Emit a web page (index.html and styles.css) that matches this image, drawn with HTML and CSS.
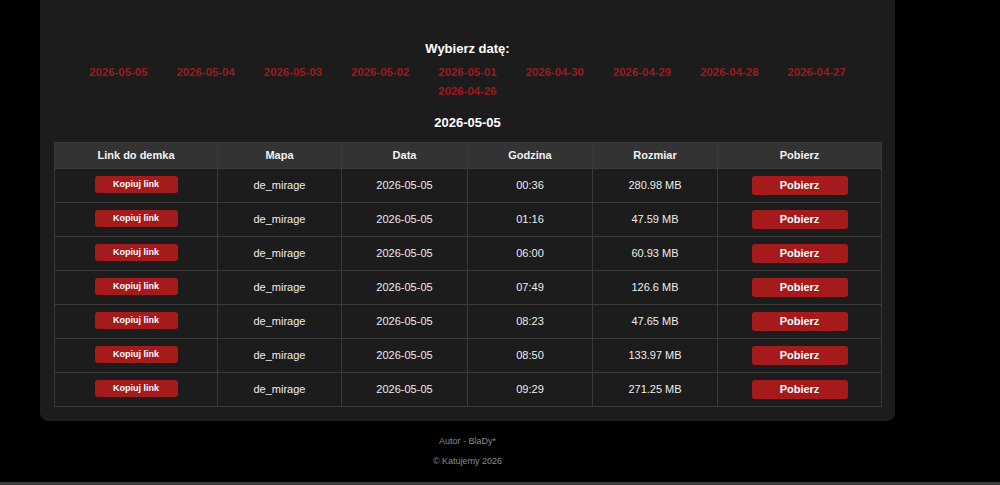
FILE: index.html
```html
<!DOCTYPE html>
<html lang="pl">
<head>
<meta charset="utf-8">
<title>Demka</title>
<link rel="stylesheet" href="styles.css">
</head>
<body>
<div class="page">
  <main class="card">
    <h2 class="pick-title">Wybierz datę:</h2>
    <nav class="dates">
      <a class="date-link" href="#">2026-05-05</a>
      <a class="date-link" href="#">2026-05-04</a>
      <a class="date-link" href="#">2026-05-03</a>
      <a class="date-link" href="#">2026-05-02</a>
      <a class="date-link" href="#">2026-05-01</a>
      <a class="date-link" href="#">2026-04-30</a>
      <a class="date-link" href="#">2026-04-29</a>
      <a class="date-link" href="#">2026-04-28</a>
      <a class="date-link" href="#">2026-04-27</a>
      <a class="date-link" href="#">2026-04-26</a>
    </nav>
    <h3 class="day-title">2026-05-05</h3>
    <table class="demos">
      <colgroup>
        <col class="c-link"><col class="c-map"><col class="c-date"><col class="c-time"><col class="c-size"><col class="c-dl">
      </colgroup>
      <thead>
        <tr><th>Link do demka</th><th>Mapa</th><th>Data</th><th>Godzina</th><th>Rozmiar</th><th>Pobierz</th></tr>
      </thead>
      <tbody>
        <tr><td><button class="btn-copy">Kopiuj link</button></td><td>de_mirage</td><td>2026-05-05</td><td>00:36</td><td>280.98 MB</td><td><a class="btn-dl" href="#">Pobierz</a></td></tr>
        <tr><td><button class="btn-copy">Kopiuj link</button></td><td>de_mirage</td><td>2026-05-05</td><td>01:16</td><td>47.59 MB</td><td><a class="btn-dl" href="#">Pobierz</a></td></tr>
        <tr><td><button class="btn-copy">Kopiuj link</button></td><td>de_mirage</td><td>2026-05-05</td><td>06:00</td><td>60.93 MB</td><td><a class="btn-dl" href="#">Pobierz</a></td></tr>
        <tr><td><button class="btn-copy">Kopiuj link</button></td><td>de_mirage</td><td>2026-05-05</td><td>07:49</td><td>126.6 MB</td><td><a class="btn-dl" href="#">Pobierz</a></td></tr>
        <tr><td><button class="btn-copy">Kopiuj link</button></td><td>de_mirage</td><td>2026-05-05</td><td>08:23</td><td>47.65 MB</td><td><a class="btn-dl" href="#">Pobierz</a></td></tr>
        <tr><td><button class="btn-copy">Kopiuj link</button></td><td>de_mirage</td><td>2026-05-05</td><td>08:50</td><td>133.97 MB</td><td><a class="btn-dl" href="#">Pobierz</a></td></tr>
        <tr><td><button class="btn-copy">Kopiuj link</button></td><td>de_mirage</td><td>2026-05-05</td><td>09:29</td><td>271.25 MB</td><td><a class="btn-dl" href="#">Pobierz</a></td></tr>
      </tbody>
    </table>
  </main>
  <footer class="footer">
    <p class="footer-line">Autor - BlaDy*</p>
    <p class="footer-line">© Katujemy 2026</p>
  </footer>
</div>
<div class="bottom-bar"></div>
</body>
</html>
```

FILE: styles.css
```css
* { box-sizing: border-box; }
html, body {
  margin: 0;
  padding: 0;
  background: #000;
  color: #eee;
  font-family: "Liberation Sans", Arial, sans-serif;
  overflow: hidden;
}
.page {
  width: 935px;
}
.card {
  width: 855px;
  margin: 0 auto;
  background: #1c1c1d;
  border-radius: 0 0 8px 8px;
  padding: 41px 14px 14px;
}
.pick-title {
  margin: 0;
  text-align: center;
  font-size: 13px;
  line-height: 15px;
  font-weight: bold;
  color: #fff;
}
.dates {
  margin-top: 7px;
  display: flex;
  flex-wrap: wrap;
  justify-content: center;
  column-gap: 29px;
}
.date-link {
  font-size: 11.4px;
  line-height: 19px;
  font-weight: bold;
  color: #9c1a1d;
  text-decoration: none;
}
.day-title {
  margin: 14px 0 12px;
  text-align: center;
  font-size: 13px;
  line-height: 15px;
  font-weight: bold;
  color: #fff;
}
.demos {
  width: 827px;
  border-collapse: collapse;
  table-layout: fixed;
  font-size: 11px;
  color: #eee;
}
.c-link { width: 163px; }
.c-map { width: 124px; }
.c-date { width: 126px; }
.c-time { width: 125px; }
.c-size { width: 125px; }
.c-dl { width: 164px; }
.demos th, .demos td {
  border: 1px solid #3a3a3a;
  text-align: center;
}
.demos th {
  background: #333333;
  font-weight: bold;
  padding: 6px 6px 7px;
  line-height: 12px;
  color: #f2f2f2;
}
.demos td {
  padding: 7px 6px;
  line-height: 19px;
}
.btn-copy {
  display: inline-block;
  width: 83px;
  height: 17px;
  padding: 0;
  border: 0;
  border-radius: 3px;
  background: #a51b1b;
  color: #fff;
  font-family: "Liberation Sans", Arial, sans-serif;
  font-size: 9px;
  font-weight: bold;
  line-height: 17px;
  vertical-align: top;
  cursor: pointer;
}
.btn-dl {
  display: inline-block;
  width: 96px;
  height: 19px;
  border-radius: 3px;
  background: #a51b1b;
  color: #fff;
  font-size: 11px;
  font-weight: bold;
  line-height: 19px;
  text-decoration: none;
  vertical-align: top;
}
.footer {
  padding-top: 10px;
  text-align: center;
}
.footer-line {
  margin: 0;
  font-size: 9px;
  line-height: 20px;
  color: #8a8a8a;
}
.bottom-bar {
  margin-top: 11px;
  height: 4px;
  background: #3b3b3b;
}
```
